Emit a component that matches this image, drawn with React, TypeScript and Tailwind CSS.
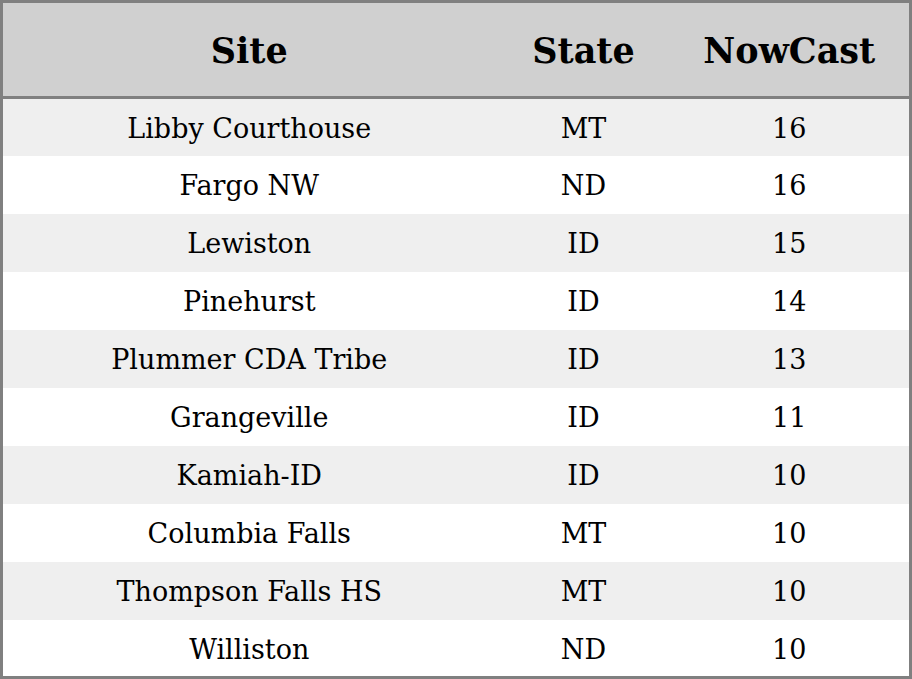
const rows: [string, string, number][] = [
  ['Libby Courthouse', 'MT', 16],
  ['Fargo NW', 'ND', 16],
  ['Lewiston', 'ID', 15],
  ['Pinehurst', 'ID', 14],
  ['Plummer CDA Tribe', 'ID', 13],
  ['Grangeville', 'ID', 11],
  ['Kamiah-ID', 'ID', 10],
  ['Columbia Falls', 'MT', 10],
  ['Thompson Falls HS', 'MT', 10],
  ['Williston', 'ND', 10],
]

export default function App() {
  return (
    <div className="h-[679px] w-[912px] bg-white font-['DejaVu_Serif',serif] text-black">
      <table className="h-full w-full table-fixed border-collapse border-[3px] border-[#808080]">
        <colgroup>
          <col className="w-[494px]" />
          <col className="w-[172px]" />
          <col />
        </colgroup>
        <thead>
          <tr className="h-[96px] border-b-[3px] border-[#808080] bg-[#d0d0d0]">
            <th className="pt-[4px] text-center text-[35px] font-bold">Site</th>
            <th className="pt-[4px] pl-[4px] text-center text-[35px] font-bold">State</th>
            <th className="pt-[4px] pl-[2px] text-center text-[35px] font-bold">NowCast</th>
          </tr>
        </thead>
        <tbody>
          {rows.map(([site, state, value], i) => (
            <tr key={site} className={i % 2 === 0 ? 'h-[57.7px] bg-[#efefef]' : 'h-[57.7px] bg-white'}>
              <td className="pt-[4px] text-center text-[27px]">{site}</td>
              <td className="pt-[4px] pl-[4px] text-center text-[27px]">{state}</td>
              <td className="pt-[4px] pl-[2px] text-center text-[27px]">{value}</td>
            </tr>
          ))}
        </tbody>
      </table>
    </div>
  )
}
